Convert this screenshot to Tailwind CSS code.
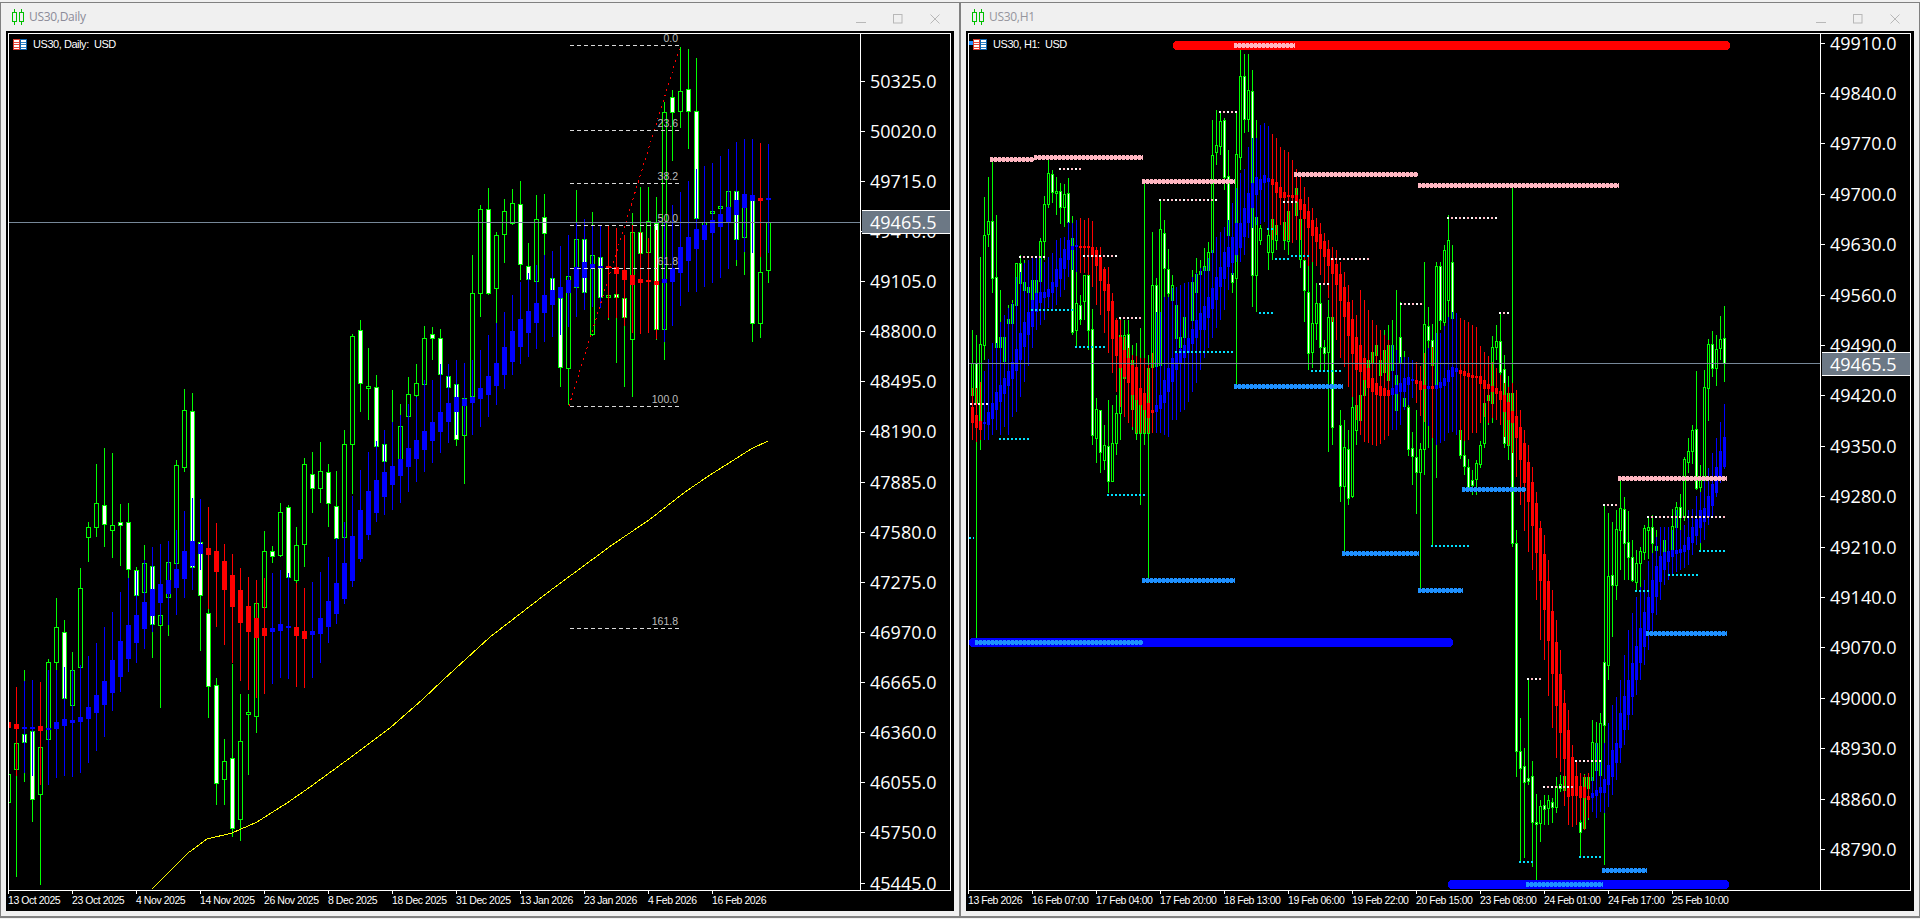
<!DOCTYPE html>
<html lang="en">
<head>
  <meta charset="UTF-8" />
  <title>US30 charts</title>
  <script src="https://cdn.jsdelivr.net/npm/@tailwindcss/browser@4"></script>
</head>
<body class="w-[1920px] h-[919px] overflow-hidden bg-[#f0f0f0]">
  <div class="h-[2px]"></div>
  <main class="flex">

    <!-- Daily window -->
    <section class="w-[960px] h-[916px] border-x border-t border-b-2 border-[#808080] flex flex-col">
      <header class="h-[28px] shrink-0 flex items-center pl-[11px] pr-[19px]">
        <svg class="w-[12px] h-[16px]" viewBox="0 0 12 16" fill="none" stroke="#00c000" stroke-width="1"><path d="M2.5 0V3M2.5 13V16M9.5 0V3M9.5 13V16"/><rect x="0.5" y="3.5" width="4" height="9"/><rect x="7.5" y="3.5" width="4" height="9"/></svg>
        <span class="ml-[5px] text-[12px] tracking-[-0.3px] text-[#8b8b98] font-['Open_Sans',sans-serif]">US30,Daily</span>
        <div class="ml-auto flex gap-[27px] mt-[3px]">
          <svg class="w-[10px] h-[10px]" viewBox="0 0 10 10" stroke="#b8b8b8" fill="none"><path d="M0 8.5H10"/></svg>
          <svg class="w-[10px] h-[10px]" viewBox="0 0 10 10" stroke="#b8b8b8" fill="none"><rect x="0.5" y="0.5" width="8.5" height="8.5"/></svg>
          <svg class="w-[10px] h-[10px]" viewBox="0 0 10 10" stroke="#b8b8b8" fill="none"><path d="M0.5 0.5L9.5 9.5M9.5 0.5L0.5 9.5"/></svg>
        </div>
      </header>
      <div class="h-[880px] mx-[5px] bg-black pt-[2px] pl-[2px] pr-[3px]">
        <div class="w-[943px] h-[858px] border border-white flex relative">
          <div class="w-[851px] h-[856px] relative">
            <svg id="daily" class="block" width="851" height="856" viewBox="9 34 851 856" shape-rendering="crispEdges"></svg>
            <div class="absolute left-[4px] top-[5px] flex items-center gap-[6px] text-white text-[11px] leading-none tracking-[-0.45px] font-['Liberation_Sans',sans-serif] whitespace-pre">
              <svg class="w-[14px] h-[11px]" viewBox="0 0 14 11" shape-rendering="crispEdges"><rect width="7" height="11" fill="#d83b2e"/><rect x="7" width="7" height="11" fill="#0f62ac"/><rect x="1" y="1" width="5" height="9" fill="#fff"/><rect x="8" y="1" width="5" height="9" fill="#fff"/><path d="M1 3H6M1 5.500H6M1 8H6" stroke="#e8483a"/><path d="M8 3H13M8 5.500H13M8 8H13" stroke="#2a7fc4"/></svg>
              <span>US30, Daily:  USD</span>
            </div>
          </div>
          <div class="w-[90px] h-[856px] border-l border-white overflow-hidden relative pt-[22px] text-white text-[18px] font-['Open_Sans',sans-serif]">
            <p class="h-[50.125px] flex items-center"><i class="w-[4px] h-px bg-white mr-[5px]"></i>50325.0</p>
            <p class="h-[50.125px] flex items-center"><i class="w-[4px] h-px bg-white mr-[5px]"></i>50020.0</p>
            <p class="h-[50.125px] flex items-center"><i class="w-[4px] h-px bg-white mr-[5px]"></i>49715.0</p>
            <p class="h-[50.125px] flex items-center"><i class="w-[4px] h-px bg-white mr-[5px]"></i>49410.0</p>
            <p class="h-[50.125px] flex items-center"><i class="w-[4px] h-px bg-white mr-[5px]"></i>49105.0</p>
            <p class="h-[50.125px] flex items-center"><i class="w-[4px] h-px bg-white mr-[5px]"></i>48800.0</p>
            <p class="h-[50.125px] flex items-center"><i class="w-[4px] h-px bg-white mr-[5px]"></i>48495.0</p>
            <p class="h-[50.125px] flex items-center"><i class="w-[4px] h-px bg-white mr-[5px]"></i>48190.0</p>
            <p class="h-[50.125px] flex items-center"><i class="w-[4px] h-px bg-white mr-[5px]"></i>47885.0</p>
            <p class="h-[50.125px] flex items-center"><i class="w-[4px] h-px bg-white mr-[5px]"></i>47580.0</p>
            <p class="h-[50.125px] flex items-center"><i class="w-[4px] h-px bg-white mr-[5px]"></i>47275.0</p>
            <p class="h-[50.125px] flex items-center"><i class="w-[4px] h-px bg-white mr-[5px]"></i>46970.0</p>
            <p class="h-[50.125px] flex items-center"><i class="w-[4px] h-px bg-white mr-[5px]"></i>46665.0</p>
            <p class="h-[50.125px] flex items-center"><i class="w-[4px] h-px bg-white mr-[5px]"></i>46360.0</p>
            <p class="h-[50.125px] flex items-center"><i class="w-[4px] h-px bg-white mr-[5px]"></i>46055.0</p>
            <p class="h-[50.125px] flex items-center"><i class="w-[4px] h-px bg-white mr-[5px]"></i>45750.0</p>
            <p class="h-[50.125px] flex items-center"><i class="w-[4px] h-px bg-white mr-[5px]"></i>45445.0</p>
            <div class="absolute left-[1px] top-[176px] w-[88px] h-[24px] bg-[#6c7885] border-y border-white flex items-center pl-[8px] text-white">49465.5</div>
          </div>
        </div>
        <div class="flex text-white text-[10.5px] leading-[12px] tracking-[-0.45px] font-['Liberation_Sans',sans-serif] whitespace-nowrap">
          <div class="w-16"><i class="block w-px h-[3px] bg-white"></i>13 Oct 2025</div>
          <div class="w-16"><i class="block w-px h-[3px] bg-white"></i>23 Oct 2025</div>
          <div class="w-16"><i class="block w-px h-[3px] bg-white"></i>4 Nov 2025</div>
          <div class="w-16"><i class="block w-px h-[3px] bg-white"></i>14 Nov 2025</div>
          <div class="w-16"><i class="block w-px h-[3px] bg-white"></i>26 Nov 2025</div>
          <div class="w-16"><i class="block w-px h-[3px] bg-white"></i>8 Dec 2025</div>
          <div class="w-16"><i class="block w-px h-[3px] bg-white"></i>18 Dec 2025</div>
          <div class="w-16"><i class="block w-px h-[3px] bg-white"></i>31 Dec 2025</div>
          <div class="w-16"><i class="block w-px h-[3px] bg-white"></i>13 Jan 2026</div>
          <div class="w-16"><i class="block w-px h-[3px] bg-white"></i>23 Jan 2026</div>
          <div class="w-16"><i class="block w-px h-[3px] bg-white"></i>4 Feb 2026</div>
          <div class="w-16"><i class="block w-px h-[3px] bg-white"></i>16 Feb 2026</div>
        </div>
      </div>
    </section>

    <!-- H1 window -->
    <section class="w-[960px] h-[916px] border-x border-t border-b-2 border-[#808080] flex flex-col">
      <header class="h-[28px] shrink-0 flex items-center pl-[11px] pr-[19px]">
        <svg class="w-[12px] h-[16px]" viewBox="0 0 12 16" fill="none" stroke="#00c000" stroke-width="1"><path d="M2.5 0V3M2.5 13V16M9.5 0V3M9.5 13V16"/><rect x="0.5" y="3.5" width="4" height="9"/><rect x="7.5" y="3.5" width="4" height="9"/></svg>
        <span class="ml-[5px] text-[12px] tracking-[-0.3px] text-[#95959d] font-['Open_Sans',sans-serif]">US30,H1</span>
        <div class="ml-auto flex gap-[27px] mt-[3px]">
          <svg class="w-[10px] h-[10px]" viewBox="0 0 10 10" stroke="#b8b8b8" fill="none"><path d="M0 8.5H10"/></svg>
          <svg class="w-[10px] h-[10px]" viewBox="0 0 10 10" stroke="#b8b8b8" fill="none"><rect x="0.5" y="0.5" width="8.5" height="8.5"/></svg>
          <svg class="w-[10px] h-[10px]" viewBox="0 0 10 10" stroke="#b8b8b8" fill="none"><path d="M0.5 0.5L9.5 9.5M9.5 0.5L0.5 9.5"/></svg>
        </div>
      </header>
      <div class="h-[880px] mx-[5px] bg-black pt-[2px] pl-[2px] pr-[3px]">
        <div class="w-[943px] h-[858px] border border-white flex relative">
          <div class="w-[851px] h-[856px] relative">
            <svg id="hourly" class="block" width="851" height="856" viewBox="969 34 851 856" shape-rendering="crispEdges"></svg>
            <div class="absolute left-[4px] top-[5px] flex items-center gap-[6px] text-white text-[11px] leading-none tracking-[-0.45px] font-['Liberation_Sans',sans-serif] whitespace-pre">
              <svg class="w-[14px] h-[11px]" viewBox="0 0 14 11" shape-rendering="crispEdges"><rect width="7" height="11" fill="#d83b2e"/><rect x="7" width="7" height="11" fill="#0f62ac"/><rect x="1" y="1" width="5" height="9" fill="#fff"/><rect x="8" y="1" width="5" height="9" fill="#fff"/><path d="M1 3H6M1 5.500H6M1 8H6" stroke="#e8483a"/><path d="M8 3H13M8 5.500H13M8 8H13" stroke="#2a7fc4"/></svg>
              <span>US30, H1:  USD</span>
            </div>
          </div>
          <div class="w-[90px] h-[856px] border-l border-white overflow-hidden relative text-white text-[18px] font-['Open_Sans',sans-serif]">
            <div class="-mt-[16px]">
              <p class="h-[50.4px] flex items-center"><i class="w-[4px] h-px bg-white mr-[5px]"></i>49910.0</p>
              <p class="h-[50.4px] flex items-center"><i class="w-[4px] h-px bg-white mr-[5px]"></i>49840.0</p>
              <p class="h-[50.4px] flex items-center"><i class="w-[4px] h-px bg-white mr-[5px]"></i>49770.0</p>
              <p class="h-[50.4px] flex items-center"><i class="w-[4px] h-px bg-white mr-[5px]"></i>49700.0</p>
              <p class="h-[50.4px] flex items-center"><i class="w-[4px] h-px bg-white mr-[5px]"></i>49630.0</p>
              <p class="h-[50.4px] flex items-center"><i class="w-[4px] h-px bg-white mr-[5px]"></i>49560.0</p>
              <p class="h-[50.4px] flex items-center"><i class="w-[4px] h-px bg-white mr-[5px]"></i>49490.0</p>
              <p class="h-[50.4px] flex items-center"><i class="w-[4px] h-px bg-white mr-[5px]"></i>49420.0</p>
              <p class="h-[50.4px] flex items-center"><i class="w-[4px] h-px bg-white mr-[5px]"></i>49350.0</p>
              <p class="h-[50.4px] flex items-center"><i class="w-[4px] h-px bg-white mr-[5px]"></i>49280.0</p>
              <p class="h-[50.4px] flex items-center"><i class="w-[4px] h-px bg-white mr-[5px]"></i>49210.0</p>
              <p class="h-[50.4px] flex items-center"><i class="w-[4px] h-px bg-white mr-[5px]"></i>49140.0</p>
              <p class="h-[50.4px] flex items-center"><i class="w-[4px] h-px bg-white mr-[5px]"></i>49070.0</p>
              <p class="h-[50.4px] flex items-center"><i class="w-[4px] h-px bg-white mr-[5px]"></i>49000.0</p>
              <p class="h-[50.4px] flex items-center"><i class="w-[4px] h-px bg-white mr-[5px]"></i>48930.0</p>
              <p class="h-[50.4px] flex items-center"><i class="w-[4px] h-px bg-white mr-[5px]"></i>48860.0</p>
              <p class="h-[50.4px] flex items-center"><i class="w-[4px] h-px bg-white mr-[5px]"></i>48790.0</p>
            </div>
            <div class="absolute left-[1px] top-[318px] w-[88px] h-[24px] bg-[#6c7885] border-y border-white flex items-center pl-[8px] text-white">49465.5</div>
          </div>
        </div>
        <div class="flex text-white text-[10.5px] leading-[12px] tracking-[-0.45px] font-['Liberation_Sans',sans-serif] whitespace-nowrap">
          <div class="w-16"><i class="block w-px h-[3px] bg-white"></i>13 Feb 2026</div>
          <div class="w-16"><i class="block w-px h-[3px] bg-white"></i>16 Feb 07:00</div>
          <div class="w-16"><i class="block w-px h-[3px] bg-white"></i>17 Feb 04:00</div>
          <div class="w-16"><i class="block w-px h-[3px] bg-white"></i>17 Feb 20:00</div>
          <div class="w-16"><i class="block w-px h-[3px] bg-white"></i>18 Feb 13:00</div>
          <div class="w-16"><i class="block w-px h-[3px] bg-white"></i>19 Feb 06:00</div>
          <div class="w-16"><i class="block w-px h-[3px] bg-white"></i>19 Feb 22:00</div>
          <div class="w-16"><i class="block w-px h-[3px] bg-white"></i>20 Feb 15:00</div>
          <div class="w-16"><i class="block w-px h-[3px] bg-white"></i>23 Feb 08:00</div>
          <div class="w-16"><i class="block w-px h-[3px] bg-white"></i>24 Feb 01:00</div>
          <div class="w-16"><i class="block w-px h-[3px] bg-white"></i>24 Feb 17:00</div>
          <div class="w-16"><i class="block w-px h-[3px] bg-white"></i>25 Feb 10:00</div>
        </div>
      </div>
    </section>
  </main>

  <script>
    // candles: x, high, body top, body bottom, low, white fill
    const dailyCandles = [
      [8,770,774,802,815,0],[16,700,743,769,877,0],[24,670,734,742,782,1],[32,715,731,799,822,1],[40,730,747,794,885,0],[48,659,662,739,745,0],
      [56,598,627,662,690,0],[64,620,632,698,705,1],[72,652,670,705,710,0],[80,568,588,667,690,0],[88,522,527,537,562,0],[96,464,503,527,537,0],
      [104,448,505,524,547,1],[112,453,525,530,558,0],[120,504,522,525,566,1],[128,503,522,569,578,1],[136,567,570,595,597,1],[144,545,563,592,592,0],
      [152,563,566,624,658,1],[160,613,615,625,708,0],[168,560,562,597,636,0],[176,460,465,563,565,0],[184,389,410,467,472,0],[192,393,411,567,570,1],
      [200,540,542,595,651,1],[208,609,613,686,718,1],[216,678,685,783,805,1],[224,739,761,779,805,0],[232,664,758,828,837,1],[240,694,741,819,841,0],
      [248,694,712,714,775,0],[256,600,603,716,733,0],[264,531,551,607,610,0],[272,546,551,556,563,1],[280,503,512,555,557,0],[288,505,507,577,578,1],
      [296,527,545,580,583,0],[304,458,464,544,567,0],[312,452,474,488,513,1],[320,442,471,488,503,0],[328,464,472,503,527,1],[336,471,506,538,540,1],
      [344,430,444,537,540,0],[352,334,336,444,494,0],[360,320,330,383,412,1],[368,348,386,388,420,0],[376,375,387,446,448,1],[384,430,444,461,463,1],
      [392,390,422,422,422,0],[400,404,426,459,461,0],[408,377,394,416,420,0],[416,364,383,395,400,0],[424,326,338,384,388,0],[432,327,334,338,360,1],
      [440,329,338,374,376,1],[448,376,376,387,390,1],[456,380,384,439,446,1],[464,398,398,435,484,0],[472,255,293,396,398,0],[480,205,209,293,317,0],
      [488,188,209,293,295,1],[496,232,235,288,323,0],[504,199,211,234,263,0],[512,189,203,223,225,0],[520,181,204,264,280,1],[528,243,266,279,281,1],
      [536,195,219,281,283,0],[544,194,217,233,255,1],[552,276,278,290,292,1],[560,290,298,367,387,1],[568,275,276,368,405,0],[576,190,239,287,290,0],
      [584,220,239,292,310,1],[592,212,255,334,336,0],[600,240,257,297,300,1],[608,290,295,297,320,0],[616,290,294,297,363,1],[624,290,298,317,387,1],
      [632,213,232,339,397,0],[640,187,232,253,255,1],[648,187,221,252,254,0],[656,197,223,329,340,1],[664,102,112,329,360,0],[672,90,97,112,161,1],
      [680,47,91,111,128,0],[688,49,89,111,149,1],[696,58,111,218,220,1],[704,170,222,225,230,0],[712,205,211,213,215,0],[720,200,206,208,210,0],
      [728,149,191,207,210,0],[736,180,191,239,266,1],[744,190,203,237,275,0],[752,195,196,323,342,1],[760,257,272,323,338,0],[768,222,222,270,283,0]
    ];
    // heiken ashi: x, body top, body bottom, high, low, red
    const dailyHa = [
      [8,722,728,700,780,1],[16,724,729,687,776,1],[24,727,728,681,773,0],[32,727,728,680,776,0],[40,726,731,682,785,1],[48,728,729,670,785,0],
      [56,722,729,670,778,0],[64,719,726,667,776,0],[72,720,723,670,777,0],[80,717,722,665,773,0],[88,707,719,656,763,0],[96,695,713,643,751,0],
      [104,681,705,627,737,0],[112,660,693,612,711,0],[120,641,677,592,692,0],[128,625,659,578,672,0],[136,615,643,571,663,0],[144,602,629,560,649,0],
      [152,589,616,547,632,0],[160,584,603,544,624,0],[168,580,594,541,625,0],[176,569,588,530,615,0],[184,551,579,511,598,0],[192,541,566,498,590,0],
      [200,544,554,499,570,0],[208,548,555,507,609,1],[216,551,572,523,627,1],[224,561,590,544,645,1],[232,575,607,554,663,1],[240,590,623,568,681,1],
      [248,606,632,577,690,1],[256,618,638,580,698,1],[264,628,636,578,694,1],[272,628,632,573,684,0],[280,624,631,570,678,0],[288,626,628,573,679,0],
      [296,627,636,583,687,1],[304,631,639,588,688,1],[312,631,635,582,678,0],[320,618,634,572,663,0],[328,601,627,557,643,0],[336,583,614,538,624,0],
      [344,563,599,522,604,0],[352,536,581,496,587,0],[360,510,559,470,562,0],[368,491,535,452,540,0],[376,480,513,441,522,0],[384,472,497,430,515,0],
      [392,466,485,422,510,0],[400,459,476,415,503,0],[408,448,467,404,492,0],[416,440,459,397,482,0],[424,431,450,380,472,0],[432,422,441,380,463,0],
      [440,412,432,364,453,0],[448,403,422,364,443,0],[456,397,412,360,435,0],[464,399,406,363,435,0],[472,397,403,360,435,0],[480,388,399,350,427,0],
      [488,376,395,335,417,0],[496,363,386,323,405,0],[504,347,375,312,389,0],[512,331,362,295,375,0],[520,319,347,282,364,0],[528,311,333,273,357,0],
      [536,303,323,265,349,0],[544,295,313,255,342,0],[552,290,305,251,337,0],[560,287,298,246,335,0],[568,280,293,235,327,0],[576,267,287,222,317,0],
      [584,262,278,219,310,0],[592,264,269,225,307,0],[600,266,268,225,308,0],[608,266,268,226,318,1],[616,267,274,228,318,1],[624,270,280,235,326,1],
      [632,275,285,225,333,1],[640,279,283,232,334,1],[648,280,282,238,333,1],[656,281,285,230,339,1],[664,279,283,223,342,0],[672,268,282,205,326,0],
      [680,247,273,192,306,0],[688,237,261,181,292,0],[696,229,249,169,292,0],[704,225,240,166,287,0],[712,220,233,163,283,0],[720,214,227,156,278,0],
      [728,207,222,149,269,0],[736,200,215,142,260,0],[744,194,208,139,252,0],[752,195,201,139,253,0],[760,198,201,143,257,1],[768,198,200,144,253,0]
    ];
    const hourlyCandles = [
      [972,330,363,395,440,0],[976,335,363,403,638,1],[980,257,344,427,450,0],[984,197,235,345,360,0],[988,177,221,234,247,0],[992,160,221,278,293,1],
      [996,215,277,347,360,1],[1000,290,337,347,352,0],[1004,337,337,361,366,0],[1008,305,319,323,330,0],[1012,300,304,323,330,0],[1016,263,263,305,310,0],
      [1020,255,263,283,290,1],[1024,260,282,290,296,0],[1028,268,287,292,300,0],[1032,265,280,300,305,0],[1036,275,280,303,310,0],[1040,238,241,281,293,0],
      [1044,196,204,241,260,0],[1048,158,173,204,208,0],[1052,170,174,192,203,1],[1056,177,191,193,215,0],[1060,183,191,207,224,1],[1064,184,194,207,227,0],
      [1068,178,193,222,238,1],[1072,216,238,332,335,1],[1076,272,303,330,347,0],[1080,295,305,319,325,1],[1084,275,275,301,320,0],[1088,275,275,330,350,1],
      [1092,309,329,435,445,1],[1096,398,409,438,463,0],[1100,410,410,452,473,1],[1104,425,445,460,470,0],[1108,400,446,481,493,1],[1112,405,443,481,482,0],
      [1116,395,413,443,455,0],[1120,317,335,413,440,0],[1124,320,335,378,415,0],[1128,320,334,370,410,1],[1132,345,360,409,430,0],[1136,343,367,433,440,0],
      [1140,328,398,433,505,0],[1144,181,403,433,445,0],[1148,355,368,433,578,0],[1152,232,285,367,380,0],[1156,278,285,366,380,1],[1160,200,229,365,380,0],
      [1164,220,233,268,300,1],[1168,249,269,293,370,1],[1172,275,285,300,370,0],[1176,290,305,338,345,0],[1180,300,337,347,350,0],[1184,305,317,337,340,0],
      [1192,270,282,320,330,0],[1196,258,274,292,322,0],[1200,260,271,274,292,0],[1204,248,266,270,300,0],[1208,242,252,270,275,0],[1212,120,155,252,260,0],
      [1216,110,145,152,165,0],[1220,112,121,146,155,0],[1224,118,120,177,190,1],[1228,150,176,235,280,1],[1232,230,273,282,293,1],[1236,113,154,278,385,0],
      [1240,50,76,157,170,0],[1244,54,76,119,133,1],[1248,54,90,119,132,0],[1252,70,91,275,307,1],[1256,120,217,275,312,0],[1260,225,228,240,245,0],
      [1268,210,235,252,270,0],[1272,200,219,252,260,0],[1276,218,225,240,250,0],[1284,215,222,240,250,0],[1288,205,211,241,255,0],[1296,177,188,215,225,0],
      [1300,177,219,259,268,0],[1304,196,260,290,322,1],[1308,255,292,353,370,1],[1312,257,323,352,368,0],[1316,283,303,323,340,0],[1320,283,303,347,370,1],
      [1324,340,347,353,370,1],[1328,300,317,352,452,0],[1332,300,317,427,445,1],[1340,410,425,486,502,1],[1344,420,447,486,552,0],[1348,430,449,498,505,1],
      [1352,395,407,496,498,0],[1356,390,405,430,445,0],[1360,370,395,420,432,0],[1364,360,372,395,410,1],[1368,345,360,372,385,0],[1372,340,352,362,400,0],
      [1376,335,345,355,380,1],[1380,340,360,375,395,0],[1384,330,350,372,400,0],[1388,325,345,380,395,1],[1392,320,345,370,395,0],[1396,290,375,410,430,1],
      [1400,302,337,362,400,1],[1404,351,398,406,410,1],[1408,400,407,449,456,1],[1412,432,448,456,485,1],[1416,410,457,472,514,1],[1420,443,449,472,588,0],
      [1424,262,324,449,475,0],[1428,307,326,340,448,1],[1432,324,340,365,545,1],[1436,262,266,386,478,0],[1440,262,266,320,330,1],[1444,245,250,322,340,0],
      [1448,215,240,300,320,0],[1452,245,262,318,330,1],[1460,420,430,455,459,1],[1464,441,455,466,475,1],[1468,459,467,487,490,1],[1472,470,480,485,495,1],
      [1476,460,463,479,495,0],[1480,441,445,464,468,0],[1484,385,403,443,448,0],[1488,390,395,400,425,0],[1492,336,347,403,423,0],[1496,325,341,347,360,0],
      [1500,312,341,372,403,1],[1504,355,369,443,448,1],[1508,376,393,445,460,1],[1512,188,393,543,547,1],[1516,530,543,751,777,1],[1520,718,751,768,861,1],
      [1524,748,766,782,858,1],[1528,678,778,781,785,1],[1532,761,776,822,867,1],[1536,794,822,824,880,1],[1540,800,806,823,842,0],[1544,795,805,809,825,1],
      [1548,795,800,808,825,0],[1552,798,802,807,823,1],[1556,777,786,807,813,0],[1560,775,784,788,792,0],[1564,770,776,790,800,0],[1572,770,778,795,810,0],
      [1580,773,822,832,856,1],[1584,774,777,828,830,0],[1588,774,777,788,820,0],[1592,720,742,780,800,0],[1596,722,743,770,818,1],[1600,713,723,775,812,0],
      [1604,504,662,725,865,1],[1608,513,576,665,680,0],[1612,522,575,585,637,1],[1616,510,529,585,600,0],[1620,480,508,530,570,0],[1624,497,509,543,580,1],
      [1628,511,542,557,580,1],[1632,540,557,580,582,1],[1636,550,563,582,590,0],[1640,547,551,563,593,0],[1644,525,528,552,560,0],[1648,516,527,530,559,0],
      [1652,515,527,543,560,1],[1656,530,546,550,565,0],[1664,530,540,555,570,0],[1672,509,526,553,560,0],[1676,502,507,527,540,0],[1680,494,507,517,550,1],
      [1684,457,459,517,521,0],[1688,438,451,462,473,0],[1692,425,430,451,464,0],[1696,371,429,488,490,1],[1700,465,480,487,550,0],[1704,370,387,480,480,0],
      [1708,339,344,388,421,0],[1712,331,344,368,377,1],[1716,335,349,368,386,0],[1720,316,339,348,360,0],[1724,306,338,363,382,1]
    ];
    const hourlyHa = [
      [972,407,423,388,440,1],[976,415,428,388,442,1],[980,421,430,382,440,1],[984,422,424,371,440,0],[988,412,425,359,440,0],[992,403,419,343,435,0],
      [996,392,410,343,430,0],[1000,385,402,322,435,0],[1004,378,394,315,427,0],[1008,371,386,308,435,0],[1012,362,379,303,417,0],[1016,349,371,277,412,0],
      [1020,333,360,272,397,0],[1024,322,347,263,382,0],[1028,312,335,260,366,0],[1032,300,327,257,348,0],[1036,293,312,257,330,0],[1040,292,303,257,325,0],
      [1044,292,298,262,320,0],[1048,289,297,257,308,0],[1052,282,293,253,310,0],[1056,269,287,240,305,0],[1060,258,279,238,297,0],[1064,249,269,237,290,0],
      [1068,240,260,222,277,0],[1072,246,250,223,270,0],[1076,245,247,220,272,0],[1080,246,248,218,273,1],[1084,246,248,220,273,1],[1088,246,248,218,275,1],
      [1092,247,257,221,287,1],[1096,250,266,247,305,1],[1100,257,281,247,315,1],[1104,269,291,267,333,1],[1108,284,311,267,353,1],[1112,301,339,293,373,1],
      [1116,320,356,318,392,1],[1120,337,368,320,407,1],[1124,350,377,337,417,1],[1128,358,383,348,423,1],[1132,365,395,355,427,1],[1136,367,400,356,433,1],
      [1140,388,405,358,433,1],[1144,393,410,358,433,1],[1148,403,418,365,433,1],[1152,410,413,353,433,1],[1156,405,412,312,433,0],[1160,395,409,312,433,0],
      [1164,380,403,297,435,0],[1168,368,392,297,437,0],[1172,358,382,288,420,0],[1176,353,370,287,420,0],[1180,349,363,285,412,0],[1184,345,358,283,410,0],
      [1188,338,353,282,402,0],[1192,329,344,277,392,0],[1196,320,338,273,383,0],[1200,313,330,268,370,0],[1204,306,330,267,358,0],[1208,297,318,258,348,0],
      [1212,288,309,250,338,0],[1216,277,300,237,328,0],[1220,267,287,232,320,0],[1224,252,279,227,310,0],[1228,247,267,220,290,0],[1232,237,263,203,275,0],
      [1236,223,255,188,262,0],[1240,223,248,173,262,0],[1244,208,237,169,255,0],[1248,193,223,147,238,0],[1252,183,208,138,228,0],[1256,177,195,138,225,0],
      [1260,179,190,125,224,0],[1264,175,183,123,222,0],[1268,178,182,126,228,0],[1272,179,185,134,240,1],[1276,182,193,138,235,1],[1280,187,198,147,225,1],
      [1284,192,198,150,240,1],[1288,195,197,152,240,1],[1292,195,198,160,243,1],[1296,195,202,169,240,1],[1300,199,210,177,240,1],[1304,204,219,187,260,1],
      [1308,211,228,197,266,1],[1312,220,236,208,262,1],[1316,227,242,218,266,1],[1320,234,249,223,275,1],[1324,241,257,233,283,1],[1328,249,266,240,298,1],
      [1332,258,274,247,322,1],[1336,264,285,250,340,1],[1340,274,301,262,358,1],[1344,287,317,272,367,1],[1348,302,336,285,387,1],[1352,319,354,300,397,1],
      [1356,337,370,315,420,1],[1360,345,372,290,435,1],[1364,358,380,300,442,1],[1368,368,388,310,443,1],[1372,378,392,320,445,1],[1376,383,395,325,446,1],
      [1380,386,396,330,444,1],[1384,388,396,335,440,1],[1388,390,396,340,436,1],[1392,388,395,345,430,0],[1396,385,394,350,430,0],[1400,383,392,357,425,0],
      [1404,378,392,357,410,0],[1408,377,385,357,405,0],[1412,379,381,360,398,0],[1416,380,384,362,403,1],[1420,381,390,366,416,1],[1424,385,389,353,422,1],
      [1428,386,389,348,426,0],[1432,386,389,347,438,1],[1436,385,389,333,445,0],[1440,382,388,333,443,0],[1444,378,386,326,441,0],[1448,370,382,317,433,0],
      [1452,367,377,312,432,0],[1456,368,372,313,435,0],[1460,370,374,318,440,1],[1464,371,376,320,441,1],[1468,373,377,322,440,1],[1472,375,378,325,433,1],
      [1476,376,377,327,433,1],[1480,376,384,346,423,1],[1484,380,389,352,417,1],[1488,384,389,356,423,1],[1492,386,392,362,418,1],[1496,388,394,368,420,1],
      [1500,391,400,375,425,1],[1504,395,412,383,437,1],[1508,402,420,387,445,1],[1512,411,423,383,453,1],[1516,416,438,390,477,1],[1520,427,460,410,505,1],
      [1524,443,483,430,531,1],[1528,462,502,445,552,1],[1532,482,526,467,570,1],[1536,503,553,492,600,1],[1540,528,581,521,640,1],[1544,554,610,535,660,1],
      [1548,581,641,560,696,1],[1552,611,674,590,728,1],[1556,642,706,620,758,1],[1560,674,733,650,772,1],[1564,703,759,690,806,1],[1568,730,797,710,825,1],
      [1572,757,796,745,827,1],[1576,776,796,760,825,1],[1580,786,798,773,820,1],[1584,787,798,775,830,1],[1588,796,800,773,818,1],[1592,793,798,777,812,0],
      [1596,790,796,743,818,0],[1600,787,793,762,812,0],[1604,779,793,743,813,0],[1608,765,785,723,807,0],[1612,750,777,705,795,0],[1616,743,763,697,780,0],
      [1620,713,748,680,763,0],[1624,696,730,655,745,0],[1628,680,715,630,730,0],[1632,663,697,613,715,0],[1636,646,680,597,695,0],[1640,628,663,587,680,0],
      [1644,612,647,580,665,0],[1648,597,630,561,650,0],[1652,580,613,553,632,0],[1656,566,597,537,615,0],[1660,556,582,527,600,0],[1664,552,570,527,585,0],
      [1668,551,562,527,580,0],[1672,550,557,530,575,0],[1676,550,554,510,572,0],[1680,549,553,530,570,0],[1684,545,552,525,568,0],[1688,537,550,510,565,0],
      [1692,527,543,509,555,0],[1696,519,536,496,545,0],[1700,510,528,492,543,0],[1704,508,522,480,540,0],[1708,496,517,468,525,0],[1712,484,506,453,517,0],
      [1716,467,493,438,497,0],[1720,451,477,422,483,0],[1724,437,467,404,469,0]
    ];
    // levels drawn by the indicator: y, x1, x2
    const pinkLevels = [[159,990,1034],[157,1034,1143],[181,1142,1235],[174,1294,1418],[185,1418,1619],[478,1618,1727]];
    const blueLevels = [[386,1234,1343],[580,1142,1235],[553,1342,1419],[489,1462,1526],[590,1418,1463],[633,1646,1727],[870,1602,1647]];
    const cyanLevels = [[438,999,1030],[309,1031,1073],[346,1075,1106],[351,1175,1234],[258,1275,1290],[255,1291,1310],[312,1259,1274],[370,1311,1342],
      [228,1267,1274],[494,1107,1146],[545,1431,1470],[537,969,974],[574,1668,1698],[590,1635,1650],[550,1699,1726],[861,1519,1534],[856,1579,1602]];
    const whiteLevels = [[168,1059,1082],[199,1159,1218],[111,1219,1238],[201,1283,1298],[217,1447,1498],[256,1019,1046],[255,1083,1118],[317,1119,1142],
      [258,1331,1370],[303,1400,1422],[312,1499,1510],[504,1603,1618],[516,1647,1726],[403,970,990],[283,1319,1330],[678,1527,1542],[786,1543,1574],[760,1575,1602]];
    const fibLevels = [[45,'0.0'],[130,'23.6'],[183,'38.2'],[225,'50.0'],[268,'61.8'],[406,'100.0'],[628,'161.8']];
    const maLine = '152,889 188,853 207,839 232,833 257,822 287,803 310,787 343,763 390,728 422,700 443,680 490,637 551,590 612,545 649,520 685,492 710,475 729,463 751,449 768,441';

    function rect(x, y, w, h, fill) {
      return `<rect x="${x}" y="${y}" width="${w}" height="${h}" fill="${fill}"/>`;
    }
    function drawBars(candles, ha, half) {
      let out = '';
      for (const [x, hi, top, bot, lo, white] of candles) {
        out += rect(x, hi, 1, lo - hi, '#00ff00');
        if (bot > top) {
          out += rect(x - half, top, half * 2 + 1, bot - top + 1, '#00ff00');
          out += rect(x - half + 1, top + 1, half * 2 - 1, Math.max(bot - top - 1, 1), white ? '#ffffff' : '#000000');
        }
      }
      for (const [x, top, bot, hi, lo, red] of ha) {
        const c = red ? '#ff0000' : '#0000ff';
        out += rect(x, hi, 1, lo - hi, c);
        out += rect(x - half, top, half * 2 + 1, Math.max(bot - top, 2), c);
      }
      return out;
    }
    function line(y, x1, x2, color, width, dash, offset) {
      return `<line x1="${x1}" x2="${x2}" y1="${y}" y2="${y}" stroke="${color}" stroke-width="${width}"` +
        (dash ? ` stroke-dasharray="${dash}" stroke-dashoffset="${offset || 0}"` : '') + '/>';
    }

    // daily chart
    let daily = drawBars(dailyCandles, dailyHa, 2);
    daily += `<polyline points="${maLine}" fill="none" stroke="#ffff00" stroke-width="1"/>`;
    daily += '<line x1="569" y1="406" x2="680" y2="47" stroke="#ff0000" stroke-dasharray="2 4"/>';
    for (const [y, label] of fibLevels) {
      daily += line(y + 0.5, 570, 681, '#d8d8d8', 1, '4 3');
      daily += `<text x="678" y="${y - 3}" text-anchor="end" fill="#bdbdbd" font-size="10.500" font-family="Liberation Sans, sans-serif" shape-rendering="auto">${label}</text>`;
    }
    daily += line(222.5, 9, 860, '#778899', 1);
    document.getElementById('daily').innerHTML = daily;

    // hourly chart
    let hourly = drawBars(hourlyCandles, hourlyHa, 1);
    hourly += line(363.5, 969, 1820, '#778899', 1);
    // thick zones
    hourly += `<rect x="1173" y="41" width="557" height="9" rx="4" fill="#ff0000"/>`;
    hourly += `<rect x="969" y="638" width="484" height="9" rx="4" fill="#0000ff"/>`;
    hourly += `<rect x="1448" y="880" width="281" height="9" rx="4" fill="#0000ff"/>`;
    hourly += line(642.5, 975, 1143, '#1e90ff', 3) + line(642.5, 975, 1143, '#1e90ff', 5, '3 1');
    hourly += line(884.5, 1526, 1603, '#1e90ff', 3) + line(884.5, 1526, 1603, '#1e90ff', 5, '3 1');
    hourly += line(45.5, 1234, 1295, '#ffb6c1', 3) + line(45.5, 1234, 1295, '#ffb6c1', 5, '3 1');
    for (const [y, a, b] of pinkLevels) {
      hourly += line(y + 0.5, a, b, '#ffb6c1', 3) + line(y + 0.5, a, b, '#ffb6c1', 5, '3 1');
    }
    for (const [y, a, b] of blueLevels) {
      hourly += line(y + 0.5, a, b, '#1e90ff', 3) + line(y + 0.5, a, b, '#1e90ff', 5, '3 1');
    }
    for (const [y, a, b] of cyanLevels) {
      hourly += line(y + 0.5, a, b, '#00e0ff', 2, '2 2');
    }
    for (const [y, a, b] of whiteLevels) {
      hourly += line(y + 0.5, a, b, '#ffffff', 2, '2 6') + line(y + 0.5, a, b, '#ffb6c1', 2, '2 6', 4);
    }
    // small blue marker next to the symbol icon
    hourly += rect(969, 41, 4, 4, '#1e90ff');
    document.getElementById('hourly').innerHTML = hourly;
  </script>
</body>
</html>
